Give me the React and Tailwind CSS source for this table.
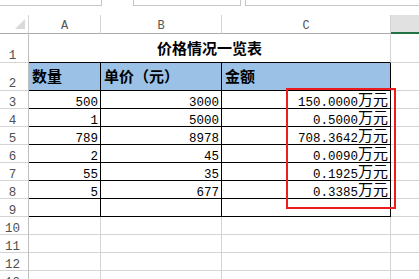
import React from 'react';

const DATA = [
  { n: 3, qty: '500', price: '3000', amount: '150.0000' },
  { n: 4, qty: '1', price: '5000', amount: '0.5000' },
  { n: 5, qty: '789', price: '8978', amount: '708.3642' },
  { n: 6, qty: '2', price: '45', amount: '0.0090' },
  { n: 7, qty: '55', price: '35', amount: '0.1925' },
  { n: 8, qty: '5', price: '677', amount: '0.3385' },
  { n: 9, qty: '', price: '', amount: '' },
];

const EMPTY_ROWS = [10, 11, 12, 13];

const mono = "font-['Liberation_Mono','Noto_Sans_CJK_SC',monospace]";
const cjk = "font-['Noto_Sans_CJK_SC',sans-serif]";

function RowHead({ n, h = 'h-[18px]', pb = 'pb-0' }) {
  return (
    <div className={`${h} ${pb} flex items-end justify-center pr-[3px] border-r border-b border-r-[#bfbfbf] border-b-[#d4d4d4] bg-white`}>
      <span className={`${mono} text-[12.5px] leading-[9px] text-[#505050]`}>{n}</span>
    </div>
  );
}

function NumCell({ children }) {
  return (
    <div className="h-[18px] flex items-end justify-end pr-[2px] border-r border-b border-black">
      <span className={`${mono} text-[12.5px] leading-[9px] text-black`}>{children}</span>
    </div>
  );
}

function ColHead({ label }) {
  return (
    <div className="h-[19px] flex items-end justify-center pb-[2px] border-r border-b border-r-[#d4d4d4] border-b-[#ababab] bg-white">
      <span className={`${mono} text-[12px] leading-[9px] text-[#555]`}>{label}</span>
    </div>
  );
}

export default function App() {
  return (
    <div className="w-[419px] h-[279px] overflow-hidden bg-white">
      {/* name box + formula bar edge */}
      <div className="flex h-[15px] items-start">
        <div className="w-[102px] h-[6px] border-r border-b border-[#c6c6c6]" />
        <div className="ml-[31px] w-[108px] h-[6px] border-l border-r border-b border-[#c6c6c6]" />
        <div className="ml-[4px] flex-1 h-[6px] border-l border-b border-[#c6c6c6]" />
      </div>

      <div className="relative">
        <div className="grid grid-cols-[29px_72px_121px_169px_28px]">
          {/* column headers */}
          <div className="h-[19px] flex items-end justify-end pr-[3px] pb-[4px] border-r border-b border-r-[#d4d4d4] border-b-[#ababab] bg-white">
            <svg width="10" height="10" viewBox="0 0 10 10">
              <polygon points="10,0 10,10 0,10" fill="#dadada" />
            </svg>
          </div>
          <ColHead label="A" />
          <ColHead label="B" />
          <ColHead label="C" />
          <div className="h-[19px] bg-[#e1e1e1] border-b-2 border-[#217346]" />

          {/* row 1: title */}
          <RowHead n={1} h="h-[29px]" pb="pb-[1px]" />
          <div className="col-span-3 h-[29px] flex items-end justify-center pb-[7px] border-r border-b border-r-[#d4d4d4] border-b-black">
            <span className={`${cjk} text-[15px] font-bold leading-[15px] text-black`}>价格情况一览表</span>
          </div>
          <div className="h-[29px] border-b border-[#d4d4d4]" />

          {/* row 2: header */}
          <RowHead n={2} h="h-[28px]" pb="pb-[1px]" />
          {['数量', '单价（元）', '金额'].map((t) => (
            <div key={t} className="h-[28px] flex items-end pl-[3px] pb-[7px] bg-[#9bc2e6] border-r border-b border-black">
              <span className={`${cjk} text-[15px] font-bold leading-[15px] text-black`}>{t}</span>
            </div>
          ))}
          <div className="h-[28px] border-b border-[#d4d4d4]" />

          {/* data rows */}
          {DATA.map((r) => (
            <React.Fragment key={r.n}>
              <RowHead n={r.n} />
              <NumCell>{r.qty}</NumCell>
              <NumCell>{r.price}</NumCell>
              <NumCell>
                {r.amount && (
                  <>
                    {r.amount}
                    <span className={`${cjk} inline-block text-[15px] leading-[13px] align-[1px]`}>万元</span>
                  </>
                )}
              </NumCell>
              <div className="h-[18px] border-b border-[#d4d4d4]" />
            </React.Fragment>
          ))}

          {EMPTY_ROWS.map((n) => (
            <React.Fragment key={n}>
              <RowHead n={n} />
              <div className="h-[18px] border-r border-b border-[#d4d4d4]" />
              <div className="h-[18px] border-r border-b border-[#d4d4d4]" />
              <div className="h-[18px] border-r border-b border-[#d4d4d4]" />
              <div className="h-[18px] border-b border-[#d4d4d4]" />
            </React.Fragment>
          ))}
        </div>

        {/* red highlight box over the amount column */}
        <div className="absolute left-[286px] top-[73px] w-[110px] h-[121px] border-[2.5px] border-[#ee1d1d] pointer-events-none" />
      </div>
    </div>
  );
}
